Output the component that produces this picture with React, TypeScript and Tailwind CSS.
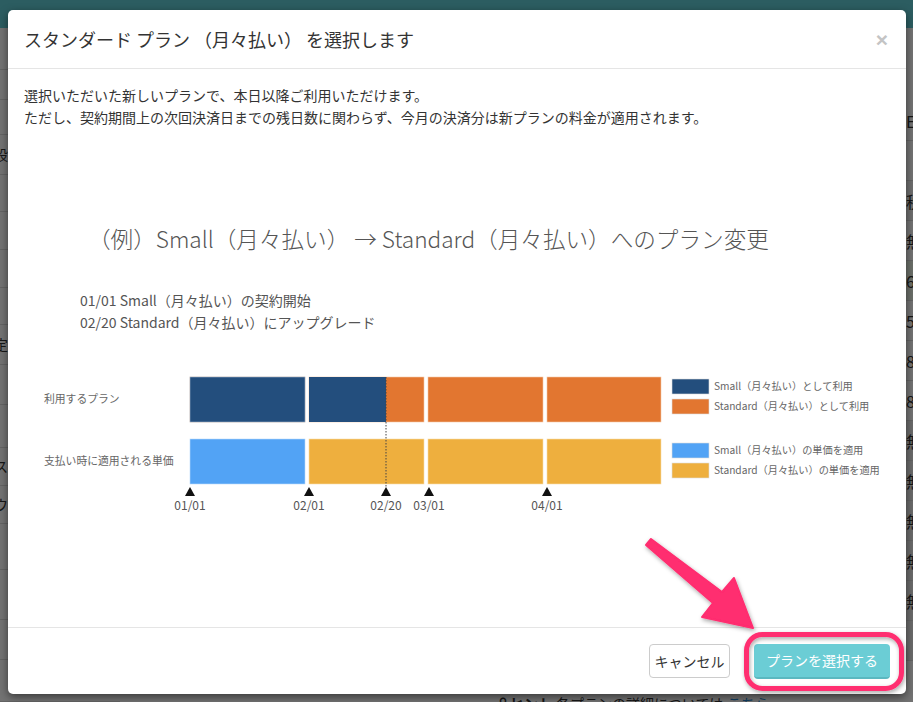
import React from 'react'

const leftRows = [
  { h: 42, t: '' },
  { h: 30, t: '' },
  { h: 35, t: '' },
  { h: 40, t: '設' },
  { h: 37, t: '' },
  { h: 38, t: '' },
  { h: 38, t: '' },
  { h: 37, t: '' },
  { h: 40, t: '定' },
  { h: 40, t: '' },
  { h: 43, t: '' },
  { h: 38, t: 'ス' },
  { h: 38, t: 'ウ' },
  { h: 46, t: '' },
  { h: 50, t: '' },
  { h: 40, t: '' },
  { h: 42, t: '' },
]

const rightRows = [
  { t: 'E', bg: 'bg-white' },
  { t: '', bg: 'bg-white' },
  { t: '税', bg: 'bg-[#f4f4f4]' },
  { t: '無', bg: 'bg-white' },
  { t: '6', bg: 'bg-[#eef6e8]' },
  { t: '5', bg: 'bg-white' },
  { t: '8', bg: 'bg-white' },
  { t: '8', bg: 'bg-white' },
  { t: '無', bg: 'bg-[#eeeeee]' },
  { t: '無', bg: 'bg-[#eeeeee]' },
  { t: '無', bg: 'bg-[#eeeeee]' },
  { t: '無', bg: 'bg-[#eeeeee]' },
  { t: '無', bg: 'bg-[#eeeeee]' },
  { t: '', bg: 'bg-[#eeeeee]' },
]

const segs = [
  { x: 166, w: 115 },
  { x: 285, w: 115 },
  { x: 404, w: 115 },
  { x: 523, w: 114 },
]

const marks = [
  { x: 166, label: '01/01' },
  { x: 285, label: '02/01' },
  { x: 362, label: '02/20' },
  { x: 405, label: '03/01' },
  { x: 523, label: '04/01' },
]

const legend = [
  { y: 9, color: '#234e7d', label: 'Small（月々払い）として利用' },
  { y: 29, color: '#e27630', label: 'Standard（月々払い）として利用' },
  { y: 73, color: '#52a3f5', label: 'Small（月々払い）の単価を適用' },
  { y: 93, color: '#eeaf3e', label: 'Standard（月々払い）の単価を適用' },
]

function PlanChart() {
  return (
    <svg width="880" height="150" viewBox="0 0 880 150" className="block overflow-visible">
      <text x="20" y="33" fontSize="10.8" fill="#666">利用するプラン</text>
      <text x="20" y="95" fontSize="10.8" fill="#666">支払い時に適用される単価</text>

      {segs.map((s, i) => (
        <rect key={'a' + i} x={s.x} y={7} width={s.w} height={45} fill="#e27630" stroke="#f6c9a8" strokeWidth="0.6" />
      ))}
      <rect x={166} y={7} width={115} height={45} fill="#234e7d" stroke="#9fb3c9" strokeWidth="0.6" />
      <rect x={285} y={7} width={77} height={45} fill="#234e7d" />

      {segs.map((s, i) => (
        <rect
          key={'b' + i}
          x={s.x}
          y={69}
          width={s.w}
          height={45}
          fill={i === 0 ? '#52a3f5' : '#eeaf3e'}
          stroke={i === 0 ? '#b9dafb' : '#f8dcaa'}
          strokeWidth="0.6"
        />
      ))}

      <line x1="362" y1="7" x2="362" y2="118" stroke="#444" strokeWidth="1" strokeDasharray="1.5 1.5" />

      {marks.map((m) => (
        <g key={m.label}>
          <polygon points={`${m.x},117 ${m.x + 5},126 ${m.x - 5},126`} fill="#111" />
          <text x={m.x} y="140" fontSize="12" fill="#555" textAnchor="middle">
            {m.label}
          </text>
        </g>
      ))}

      {legend.map((l) => (
        <g key={l.label}>
          <rect x="648" y={l.y} width="37" height="15" fill={l.color} stroke="#ddd" strokeWidth="0.6" />
          <text x="690" y={l.y + 11} fontSize="10.2" fill="#666">
            {l.label}
          </text>
        </g>
      ))}
    </svg>
  )
}

export default function App() {
  return (
    <div className="relative h-[702px] w-[913px] overflow-hidden bg-white font-['Noto_Sans_CJK_JP',sans-serif] text-[#333]">
      {/* page behind the dialog */}
      <div className="h-[28px] bg-[#62cfd7]" />
      <div className="flex">
        <div className="flex w-[120px] flex-col">
          {leftRows.map((r, i) => (
            <div
              key={i}
              style={{ height: r.h }}
              className="flex items-center border-b border-[#ddd] text-[14px]"
            >
              <span className="-ml-[6px]">{r.t}</span>
            </div>
          ))}
        </div>
        <div className="flex-1" />
        <div className="mt-[73px] flex w-[80px] flex-col">
          {rightRows.map((r, i) => (
            <div key={i} className={`flex h-[40px] items-center border-b border-[#ddd] pl-[73px] text-[16px] ${r.bg}`}>
              {r.t}
            </div>
          ))}
        </div>
      </div>
      <div className="absolute bottom-[-12px] left-[496px] flex items-center gap-1 text-[14px]">
        <span className="font-bold">♀ヒント</span>
        <span>各プランの詳細については</span>
        <span className="text-[#2a8bd6]">こちら</span>
      </div>

      {/* backdrop */}
      <div className="absolute inset-0 bg-black/55" />

      {/* dialog */}
      <div className="absolute left-[8px] top-[10px] w-[898px] rounded-[5px] bg-white shadow-[0_3px_9px_rgba(0,0,0,0.5)]">
        <div className="flex h-[59px] items-center justify-between border-b border-[#e5e5e5] pl-4 pr-[18px]">
          <h4 className="text-[18px] leading-[24px] text-[#333]">スタンダード プラン （月々払い） を選択します</h4>
          <span className="font-['Liberation_Sans',sans-serif] text-[21px] font-bold leading-none text-[#c4c4c4]">×</span>
        </div>

        <div className="h-[558px] px-4 pt-[15px]">
          <p className="text-[14px] leading-[22px] text-[#333]">
            選択いただいた新しいプランで、本日以降ご利用いただけます。
            <br />
            ただし、契約期間上の次回決済日までの残日数に関わらず、今月の決済分は新プランの料金が適用されます。
          </p>

          <div className="mt-[96px] pl-[64px] text-[22.6px] font-light leading-[30px] text-[#555]">
            （例）Small（月々払い） → Standard（月々払い）へのプラン変更
          </div>

          <div className="mt-[35px] pl-[56px] text-[14px] leading-[22px] text-[#555]">
            <div>01/01 Small（月々払い）の契約開始</div>
            <div>02/20 Standard（月々払い）にアップグレード</div>
          </div>

          <div className="mt-[37px]">
            <PlanChart />
          </div>
        </div>

        <div className="flex h-[67px] items-center justify-end gap-6 border-t border-[#e5e5e5] px-4">
          <button className="h-[34px] w-[81px] rounded-[4px] border border-[#ccc] bg-white text-[14px] text-[#333]">
            キャンセル
          </button>
          <button className="h-[35px] w-[136px] rounded-[4px] border-b-2 border-[#5bb8c0] bg-[#6bcdd5] text-[14px] text-white">
            プランを選択する
          </button>
        </div>
      </div>

      {/* annotation */}
      <svg className="pointer-events-none absolute inset-0" width="913" height="702" viewBox="0 0 913 702">
        <defs>
          <filter id="sh" x="-20%" y="-20%" width="140%" height="140%">
            <feDropShadow dx="1" dy="2" stdDeviation="2" floodColor="#000" floodOpacity="0.35" />
          </filter>
        </defs>
        <polygon
          points="646,545 651,539 722,592 734,578 753,628 702,617 713,603"
          fill="#ff2d6f"
          filter="url(#sh)"
          strokeLinejoin="round"
          stroke="#ff2d6f"
          strokeWidth="2"
        />
        <rect x="746.5" y="634.5" width="155" height="54" rx="16" fill="none" stroke="#ff2d6f" strokeWidth="5" filter="url(#sh)" />
      </svg>
    </div>
  )
}
